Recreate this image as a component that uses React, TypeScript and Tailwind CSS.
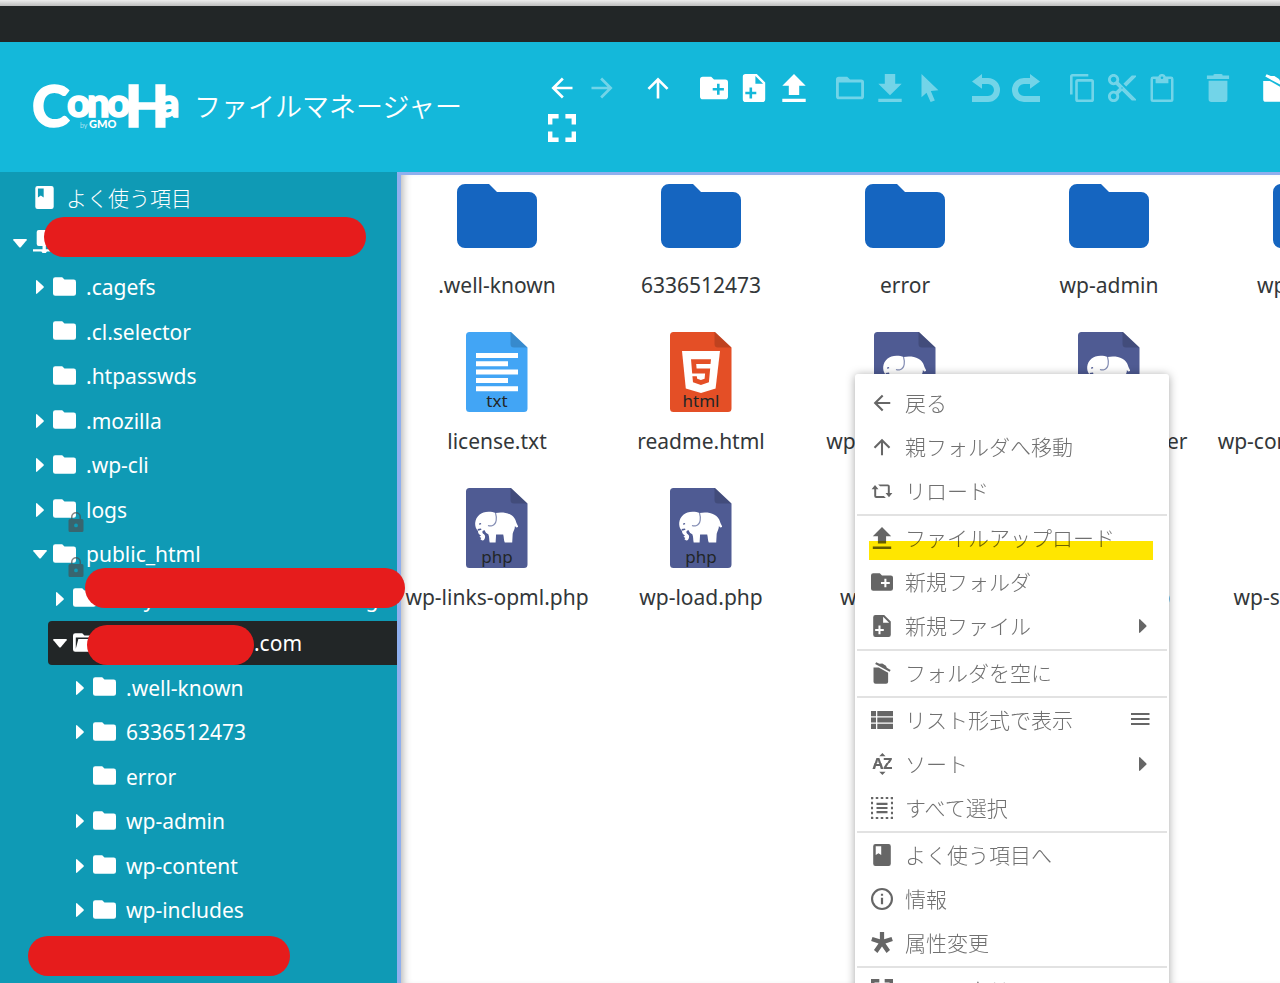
import React from 'react';

type IconProps = { className?: string };

// All glyphs share one 28 x 28 grid.
const ICONS = {
  back: 'M24.5 12.7v2.6H8.5l7.3 7.3-1.9 1.9L3.4 14 13.9 3.5l1.9 1.9-7.3 7.3z',
  forward: 'M3.5 12.7v2.6h16l-7.3 7.3 1.9 1.9L24.6 14 14.1 3.5l-1.9 1.9 7.3 7.3z',
  up: 'M12.7 24.5h2.6V8.5l7.3 7.3 1.9-1.9L14 3.4 3.5 13.9l1.9 1.9 7.3-7.3z',
  folder:
    'M2.8 2.8h8.4L14 5.6h11.2A2.8 2.8 0 0 1 28 8.4v14a2.8 2.8 0 0 1-2.8 2.8H2.8A2.8 2.8 0 0 1 0 22.4V5.6a2.8 2.8 0 0 1 2.8-2.8z',
  folderOpen:
    'M2.8 2.8h8.4L14 5.6h11.2A2.8 2.8 0 0 1 28 8.4v14a2.8 2.8 0 0 1-2.8 2.8H2.8A2.8 2.8 0 0 1 0 22.4V5.6a2.8 2.8 0 0 1 2.8-2.8zM6.5 9.8L3.4 21.5V7.8h21.8v2z',
  folderPlus:
    'M2.8 2.8h8.4L14 5.6h11.2A2.8 2.8 0 0 1 28 8.4v14a2.8 2.8 0 0 1-2.8 2.8H2.8A2.8 2.8 0 0 1 0 22.4V5.6a2.8 2.8 0 0 1 2.8-2.8zM17 9.8v4.2h-4.3v2.6H17v4.2h2.6v-4.2h4.3V14h-4.3V9.8z',
  folderOutline:
    'M2.8 2.8h8.4L14 5.6h11.2A2.8 2.8 0 0 1 28 8.4v14a2.8 2.8 0 0 1-2.8 2.8H2.8A2.8 2.8 0 0 1 0 22.4V5.6a2.8 2.8 0 0 1 2.8-2.8zM2.8 8.4v14h22.4v-14z',
  filePlus:
    'M5.6 0h11.2l8.4 8.4v16.8a2.8 2.8 0 0 1-2.8 2.8H5.6a2.8 2.8 0 0 1-2.8-2.8V2.8A2.8 2.8 0 0 1 5.6 0zM15.4 2.1v7.7h7.7zM9.5 13.5v4.2H5.3v2.6h4.2v4.2h2.6v-4.2h4.2v-2.6h-4.2v-4.2z',
  upload: 'M14 0l11.7 11.7h-6.5V21H8.8v-9.3H2.3zM2.3 24.7h23.4V28H2.3z',
  download: 'M8.8 0h10.4v9.8h6.5L14 21.3 2.3 9.8h6.5zM2.3 24.7h23.4V28H2.3z',
  cursor: 'M5.5 0v23.2l5-4.4L14.6 28l4.2-1.6-4-9.4 7.6-.7z',
  undo: 'M0 7.4L10 0v4h6a12 12 0 0 1 0 24H0v-6h16a6 6 0 0 0 0-12h-6v4.8z',
  redo: 'M28 7.4L18 0v4h-6a12 12 0 0 0 0 24h16v-6H12a6 6 0 0 1 0-12h6v4.8z',
  copy: 'M20.3 0H4.6A2.6 2.6 0 0 0 2 2.6v17.8h2.6V2.6h15.7zM23.4 5.1H9.8a2.6 2.6 0 0 0-2.6 2.6v17.7A2.6 2.6 0 0 0 9.8 28h13.6a2.6 2.6 0 0 0 2.6-2.6V7.7a2.6 2.6 0 0 0-2.6-2.6zM9.8 7.7h13.6v17.7H9.8z',
  paste:
    'M23 2.6h-5.3a3.9 3.9 0 0 0-7.4 0H5A2.5 2.5 0 0 0 2.5 5v20.5A2.5 2.5 0 0 0 5 28h18a2.5 2.5 0 0 0 2.5-2.5V5A2.5 2.5 0 0 0 23 2.6zM14 2.4a1.3 1.3 0 1 1 0 2.7 1.3 1.3 0 0 1 0-2.7zM5 5h2.6v4.2h12.8V5H23v20.5H5z',
  trash: 'M9.5.4L10.8 0h6.4l1.3.4v1h6.6v3.7H2.9V1.4h6.6zM4.6 6.7h18.8v18.5a2.8 2.8 0 0 1-2.8 2.8H7.4a2.8 2.8 0 0 1-2.8-2.8z',
  empty:
    'M3.2 7h6.6l12 6.8v11.4a2.6 2.6 0 0 1-2.6 2.6H5.8a2.6 2.6 0 0 1-2.6-2.6zM6.6.2l4.2 1.9 3.6-.1 4.6 2.9 1.2 2.5 4.8 2.9-1.3 2.2L5.3 2.6z',
  fullscreen:
    'M0 0h10.6v4.4H4.4v6.2H0zM17.4 0H28v10.6h-4.4V4.4h-6.2zM0 17.4h4.4v6.2h6.2V28H0zM23.6 17.4H28V28H17.4v-4.4h6.2z',
  reload:
    'M5.1 6.5L9.5 11.8H6.6v8.6h9.8l2.5 2.5H6.6a2.5 2.5 0 0 1-2.5-2.5v-8.6H.8zM22.9 22L18.500 16.700h2.900V8.100h-9.800L9.100 5.600h12.300a2.500 2.500 0 0 1 2.500 2.500v8.600h3.300z',
  list: 'M0 2.5h6.4v6.6H0zM8 2.5h20v6.6H8zM0 10.7h6.4v6.6H0zM8 10.7h20v6.6H8zM0 18.9h6.4v6.6H0zM8 18.9h20v6.6H8z',
  book: 'M5.6 0h16.8a2.8 2.8 0 0 1 2.8 2.8v22.4a2.8 2.8 0 0 1-2.8 2.8H5.6a2.8 2.8 0 0 1-2.8-2.8V2.8A2.8 2.8 0 0 1 5.6 0zM6 2.9v11l3.5-2.2 3.5 2.2v-11z',
  info: 'M14 0a14 14 0 1 1 0 28 14 14 0 0 1 0-28zM14 2.7a11.3 11.3 0 1 0 0 22.6 11.3 11.3 0 0 0 0-22.6zM12.6 7.2h2.8V10h-2.8zM12.6 12.4h2.8v8.4h-2.8z',
  asterisk:
    'M11.3 0h5.4v9.3l9.4-3 1.7 5.1-9.4 3.1 5.8 8.5-4.4 3.6L14 18.4l-5.8 8.2-4.4-3.6 5.8-8.5-9.4-3.1 1.7-5.1 9.4 3z',
  computer:
    'M7 0h14a2.5 2.5 0 0 1 2.5 2.5V17a2.5 2.5 0 0 1-2.5 2.5h-5.4v3.9H28v2.8H17L15.6 28h-4l-1.4-1.8H0v-2.8h11.6v-3.9H7A2.5 2.5 0 0 1 4.500 17V2.500A2.500 2.500 0 0 1 7 0z',
} as const;

type IconName = keyof typeof ICONS | 'cut' | 'sort' | 'selectAll';

const Icon = ({ name, className }: { name: IconName } & IconProps) => {
  if (name === 'cut') {
    return (
      <svg viewBox="2 2 20 20" fill="currentColor" className={className} aria-hidden="true">
        <path d="M9.64 7.64c.23-.5.36-1.05.36-1.64 0-2.21-1.79-4-4-4S2 3.79 2 6s1.79 4 4 4c.59 0 1.14-.13 1.64-.36L10 12l-2.36 2.36C7.14 14.13 6.59 14 6 14c-2.21 0-4 1.79-4 4s1.79 4 4 4 4-1.79 4-4c0-.59-.13-1.14-.36-1.64L12 14l7 7h3v-1L9.64 7.64zM6 8c-1.1 0-2-.89-2-2s.9-2 2-2 2 .89 2 2-.9 2-2 2zm0 12c-1.1 0-2-.89-2-2s.9-2 2-2 2 .89 2 2-.9 2-2 2zm6-7.5c-.28 0-.5-.22-.5-.5s.22-.5.5-.5.5.22.5.5-.22.5-.5.5zM19 3l-6 6 2 2 7-7V3z" />
      </svg>
    );
  }
  if (name === 'sort') {
    return (
      <svg viewBox="0 0 28 28" fill="currentColor" className={`overflow-visible ${className}`} aria-hidden="true">
        <path d="M14.5 0l4 4h-8zM14.5 28l4-4h-8z" />
        <text x="14.5" y="21" textAnchor="middle" fontSize="20" fontWeight="700" fontFamily="Noto Sans, sans-serif">
          AZ
        </text>
      </svg>
    );
  }
  if (name === 'selectAll') {
    return (
      <svg viewBox="0 0 28 28" fill="none" stroke="currentColor" className={className} aria-hidden="true">
        <rect x="1.3" y="1.3" width="25.4" height="25.4" strokeWidth="2.6" strokeDasharray="3.2 3.15" strokeDashoffset="1.6" />
        <path d="M7 8.7h14M7 14h14M7 19.3h14" strokeWidth="2.8" />
      </svg>
    );
  }
  return (
    <svg viewBox="0 0 28 28" fill="currentColor" fillRule="evenodd" className={className} aria-hidden="true">
      <path d={ICONS[name]} />
    </svg>
  );
};

// ── TOOLBAR ──
type Tool = { icon: IconName; label: string; disabled?: boolean };

const TOOL_GROUPS: Tool[][] = [
  [{ icon: 'back', label: '戻る' }, { icon: 'forward', label: '進む', disabled: true }],
  [{ icon: 'up', label: '親フォルダへ移動' }],
  [
    { icon: 'folderPlus', label: '新規フォルダ' },
    { icon: 'filePlus', label: '新規ファイル' },
    { icon: 'upload', label: 'ファイルアップロード' },
  ],
  [
    { icon: 'folderOutline', label: '開く', disabled: true },
    { icon: 'download', label: 'ダウンロード', disabled: true },
    { icon: 'cursor', label: '選択', disabled: true },
  ],
  [{ icon: 'undo', label: '元に戻す', disabled: true }, { icon: 'redo', label: 'やり直し', disabled: true }],
  [
    { icon: 'copy', label: 'コピー', disabled: true },
    { icon: 'cut', label: '切り取り', disabled: true },
    { icon: 'paste', label: '貼り付け', disabled: true },
  ],
  [{ icon: 'trash', label: '削除', disabled: true }],
  [{ icon: 'empty', label: 'フォルダを空に' }],
];

const ToolButton = ({ tool }: { tool: Tool }) => (
  <button
    type="button"
    aria-label={tool.label}
    disabled={tool.disabled}
    className="flex size-10 shrink-0 items-center justify-center text-white disabled:opacity-40"
  >
    <Icon name={tool.icon} className="size-7" />
  </button>
);

const Logo = () => (
  <svg viewBox="0 0 148 46" className="h-[46px] w-[148px] shrink-0 overflow-visible" fill="#fff" role="img" aria-label="ConoHa by GMO">
    <text fontFamily="Lato, sans-serif" fontWeight="900" stroke="#fff" strokeWidth="1.5">
      <tspan x="-1" y="43" fontSize="57">C</tspan>
      <tspan x="34 54 74" y="33" fontSize="40">ono</tspan>
      <tspan x="92" y="43" fontSize="57">H</tspan>
      <tspan x="126" y="33" fontSize="40">a</tspan>
    </text>
    <text y="44" fontFamily="Lato, sans-serif">
      <tspan x="47" fontSize="7">by</tspan>
      <tspan x="56" fontSize="11" fontWeight="900">GMO</tspan>
    </text>
  </svg>
);

const Header = () => (
  <header className="flex h-[130px] shrink-0 items-start overflow-hidden bg-[#14b8da]">
    <h1 className="flex w-[542px] shrink-0 items-center gap-[13px] pt-[42px] pl-[33px] text-[27px] leading-[46px] font-[350] text-white">
      <Logo />
      ファイルマネージャー
    </h1>
    <div role="toolbar" aria-label="ツールバー" className="min-w-0 flex-1 pt-[26px]">
      <div className="flex gap-4">
        {TOOL_GROUPS.map((group, i) => (
          <div key={i} className="flex shrink-0">
            {group.map((tool) => <ToolButton key={tool.label} tool={tool} />)}
          </div>
        ))}
      </div>
      <ToolButton tool={{ icon: 'fullscreen', label: 'フルスクリーン' }} />
    </div>
  </header>
);

// ── FOLDER TREE ──
type TreeItem = {
  name: string;
  level: 0 | 1 | 2 | 3;
  icon?: IconName;
  state?: 'open' | 'closed';
  locked?: boolean;
  selected?: boolean;
  mask?: string;
};

const TREE: TreeItem[] = [
  { name: 'よく使う項目', level: 0, icon: 'book' },
  { name: '', level: 0, icon: 'computer', state: 'open', mask: 'left-9 -top-[3px] w-[322px]' },
  { name: '.cagefs', level: 1, state: 'closed' },
  { name: '.cl.selector', level: 1 },
  { name: '.htpasswds', level: 1 },
  { name: '.mozilla', level: 1, state: 'closed' },
  { name: '.wp-cli', level: 1, state: 'closed' },
  { name: 'logs', level: 1, state: 'closed', locked: true },
  { name: 'public_html', level: 1, state: 'open', locked: true },
  { name: 'nanyxxxxxxxxxxxxxxxxxxxg.', level: 2, state: 'closed', mask: 'left-[37px] -top-2 w-80' },
  { name: 'example-demo.com', level: 2, icon: 'folderOpen', state: 'open', selected: true, mask: 'left-[39px] top-1 w-[167px]' },
  { name: '.well-known', level: 3, state: 'closed' },
  { name: '6336512473', level: 3, state: 'closed' },
  { name: 'error', level: 3 },
  { name: 'wp-admin', level: 3, state: 'closed' },
  { name: 'wp-content', level: 3, state: 'closed' },
  { name: 'wp-includes', level: 3, state: 'closed' },
];

const INDENT = { 0: 'ml-2', 1: 'ml-7', 2: 'ml-12', 3: 'ml-[68px]' };

const Caret = ({ state }: { state?: 'open' | 'closed' }) => (
  <svg viewBox="0 0 20 20" className="size-5 shrink-0" fill="currentColor" aria-hidden="true">
    {state === 'open' && <path d="M4 6h12q1.5 0 .6 1.2L11 14q-1 1-2 0L3.4 7.2Q2.5 6 4 6z" />}
    {state === 'closed' && <path d="M6 4q0-1.5 1.2-.6l6.3 5.8q.8.8 0 1.6l-6.3 5.8Q6 17.5 6 16z" />}
  </svg>
);

const Lock = () => (
  <svg viewBox="0 0 16 20" className="absolute top-[15px] left-[15px] h-5 w-4" fill="#4a5052" opacity="0.7" aria-hidden="true">
    <path
      fillRule="evenodd"
      d="M3 7V5a5 5 0 0 1 10 0v2h1a1.5 1.5 0 0 1 1.5 1.5v10A1.5 1.5 0 0 1 14 20H2a1.5 1.5 0 0 1-1.5-1.5v-10A1.5 1.5 0 0 1 2 7zM4.5 7h7V5a3.5 3.5 0 0 0-7 0zM8 11.5a1.9 1.9 0 1 0 0 3.8 1.9 1.9 0 0 0 0-3.8z"
    />
  </svg>
);

const Mask = ({ className }: IconProps) => (
  <span className={`absolute z-10 h-10 rounded-full bg-[#e61c1c] ${className}`} />
);

const TreeRow = ({ item }: { item: TreeItem }) => (
  <li className="h-11 even:h-[45px]">
    <a
      href="#"
      className={`relative flex h-full items-center rounded-l-sm pl-0.5 whitespace-nowrap text-white ${INDENT[item.level]} ${
        item.selected ? 'bg-[#222627]' : ''
      }`}
    >
      <Caret state={item.state} />
      <span className="relative mr-2.5 mb-0.5 ml-[3px] shrink-0">
        <Icon name={item.icon ?? 'folder'} className="size-[23px]" />
        {item.locked && <Lock />}
      </span>
      <span className={item.level === 0 ? 'mt-0.5 font-light' : 'mt-0.5'}>{item.name}</span>
      {item.mask && <Mask className={item.mask} />}
    </a>
  </li>
);

const Sidebar = () => (
  <nav aria-label="フォルダ" className="relative z-10 w-[397px] shrink-0 bg-[#0f9ab5] pt-1">
    <ul>
      {TREE.map((item, i) => <TreeRow key={i} item={item} />)}
      <li className="relative h-11">
        <Mask className="top-1 left-7 w-[262px]" />
      </li>
    </ul>
  </nav>
);

// ── FILE GRID ──
type FileKind = 'folder' | 'txt' | 'html' | 'php';

const FILES: { name: string; kind: FileKind }[] = [
  { name: '.well-known', kind: 'folder' },
  { name: '6336512473', kind: 'folder' },
  { name: 'error', kind: 'folder' },
  { name: 'wp-admin', kind: 'folder' },
  { name: 'wp-content', kind: 'folder' },
  { name: 'license.txt', kind: 'txt' },
  { name: 'readme.html', kind: 'html' },
  { name: 'wp-activate.php', kind: 'php' },
  { name: 'wp-blog-header.php', kind: 'php' },
  { name: 'wp-comments-post.php', kind: 'php' },
  { name: 'wp-links-opml.php', kind: 'php' },
  { name: 'wp-load.php', kind: 'php' },
  { name: 'wp-login.php', kind: 'php' },
  { name: 'wp-mail.php', kind: 'php' },
  { name: 'wp-settings.php', kind: 'php' },
];

const PAGE_FILL = { txt: '#42a5f5', html: '#e44f26', php: '#4f5b93' };

const FileIcon = ({ kind }: { kind: FileKind }) => {
  if (kind === 'folder') {
    return (
      <svg viewBox="0 0 80 80" className="size-20" fill="#1565c0" aria-hidden="true">
        <path d="M8 8h24l8 8h32a8 8 0 0 1 8 8v40a8 8 0 0 1-8 8H8a8 8 0 0 1-8-8V16a8 8 0 0 1 8-8z" />
      </svg>
    );
  }
  return (
    <span className="relative">
      <svg viewBox="0 0 62 80" className="h-20 w-[62px]" fill="#fff" aria-hidden="true">
        <path fill={PAGE_FILL[kind]} d="M3.5 0H45l16.5 15.5v61A3.5 3.5 0 0 1 58 80H3.5A3.5 3.5 0 0 1 0 76.5v-73A3.5 3.5 0 0 1 3.5 0z" />
        <path fill="#000" opacity="0.16" d="M45 0l16.5 15.5H48a3.5 3.5 0 0 1-3.5-3.5V0z" />
        {kind === 'txt' && <path d="M10 21h42v5H10zM10 29.3h32v5H10zM10 37.6h42v5H10zM10 46h32v5H10zM10 54.3h42v5H10z" />}
        {kind === 'html' && (
          <>
            <path d="M12 19h38l-4.4 37.5L31 61l-15.2-4.5z" />
            <path
              fill={PAGE_FILL.html}
              d="M21 27.3h20l-.5 4.8H26.2l.4 4.5h13.6l-1.3 13.6-8 2.8-7.9-2.8-.6-6h4.4l.4 2.6 3.7 1.3 3.7-1.3.5-5.2H22.2z"
            />
          </>
        )}
        {kind === 'php' && (
          <>
            <path d="M29.500 25c8-1.500 18.500 0 20.700 9.300.5 1.800 1.900 3 1.900 4.800l-1.900.4-1.300-1.500c.2 2.800-1.700 5.300-2.200 7.800l-.5 8.600h-7.400c-1.200-2-.7-5.200-1.600-8l-7.100.2-.5 7.800h-5.900c-.7-2.500-.2-5.500-1.400-8.100-1.900-.8-3.100-2.100-3.600-4-1.600-.2-2.800 1.100-2.100 2.700.5 1.200 2.600 1.400 2.500 3.400 0 2-.8 4.100-2.900 4.100l-1.800-1.300.9-1.200-1.800-1.300 1.500-1.200c-1.700-.7-3.100-2.400-3-4.500-2.500-2.200-3-5.600-2.800-8.200.7-6.600 6-10.900 13.300-11 3 0 5.300.3 7 1.200z" />
            <path fill="none" stroke={PAGE_FILL.php} strokeWidth="1.200" d="M29.500 25c1.400 4.500 1.600 11-3.500 12.700-1.500.5-2.700.3-4-.2" opacity="0.700" />
            <path fill={PAGE_FILL.php} d="M13 35.500l2-.5.2 1.200-2 .5zM11.500 41l3.500-.6.5 1.400-3.200 1z" />
          </>
        )}
      </svg>
      <span className="absolute inset-x-0 bottom-0 text-center text-[17px] leading-[23px] text-[#222627]">{kind}</span>
    </span>
  );
};

const FileGrid = () => (
  <main className="min-w-0 flex-1 overflow-hidden border-t-3 border-l-4 border-[#8fafee] bg-white shadow-[inset_8px_0_8px_-6px_rgba(0,0,0,0.3)]">
    <ul className="grid auto-rows-[156px] grid-cols-[repeat(5,192px)] gap-x-3 pt-px text-[#333739]">
      {FILES.map((file) => {
        const [base, ext] = file.name.split('.php');
        return (
          <li key={file.name} className="flex flex-col items-center gap-[15px] text-center leading-7">
            <FileIcon kind={file.kind} />
            <span className="w-full">
              {base}
              {ext !== undefined && <><wbr />.php</>}
            </span>
          </li>
        );
      })}
    </ul>
  </main>
);

// ── CONTEXT MENU ──
type MenuItem = { icon: IconName; label: string; extra?: 'submenu' | 'settings'; marked?: boolean };

const MENU: MenuItem[][] = [
  [{ icon: 'back', label: '戻る' }, { icon: 'up', label: '親フォルダへ移動' }, { icon: 'reload', label: 'リロード' }],
  [
    { icon: 'upload', label: 'ファイルアップロード', marked: true },
    { icon: 'folderPlus', label: '新規フォルダ' },
    { icon: 'filePlus', label: '新規ファイル', extra: 'submenu' },
  ],
  [{ icon: 'empty', label: 'フォルダを空に' }],
  [
    { icon: 'list', label: 'リスト形式で表示', extra: 'settings' },
    { icon: 'sort', label: 'ソート', extra: 'submenu' },
    { icon: 'selectAll', label: 'すべて選択' },
  ],
  [{ icon: 'book', label: 'よく使う項目へ' }, { icon: 'info', label: '情報' }, { icon: 'asterisk', label: '属性変更' }],
  [{ icon: 'fullscreen', label: 'フルスクリーン' }],
];

const ContextMenu = () => (
  <div
    role="menu"
    className="absolute top-[374px] left-[855px] z-20 w-[314px] rounded-[3px] bg-white py-[7px] text-[#666] shadow-[0_1px_10px_rgba(0,0,0,0.35)]"
  >
    {MENU.map((group, i) => (
      <div key={i} role="group" className={i > 0 ? 'mx-0.5 mt-px border-t-2 border-[#e2e2e2]' : 'mx-0.5'}>
        {group.map((item) => (
          <button
            key={item.label}
            type="button"
            role="menuitem"
            className="relative flex h-11 w-full items-center gap-3 pr-4 pl-3.5 text-left"
          >
            <Icon name={item.icon} className="size-[22px] shrink-0" />
            <span className="mt-0.5 flex-1 font-light text-[#707070]">{item.label}</span>
            {item.extra && (
              <svg viewBox="0 0 22 22" className="size-[22px]" fill="currentColor" aria-hidden="true">
                {item.extra === 'submenu' ? (
                  <path d="M10 5q0-1.5 1.2-.6l6 5.8q.8.8 0 1.6l-6 5.8Q10 18.5 10 17z" />
                ) : (
                  <path d="M2 4h18.5v2H2zM2 9h18.5v2H2zM2 14h18.5v2H2z" />
                )}
              </svg>
            )}
            {item.marked && <span className="absolute top-[25px] right-3.5 left-3 h-[19px] bg-[#ffe600] mix-blend-multiply" />}
          </button>
        ))}
      </div>
    ))}
  </div>
);

export default function App() {
  return (
    <div className="relative flex h-screen flex-col overflow-hidden bg-white font-['Noto_Sans','Noto_Sans_CJK_JP',sans-serif] text-[21px]">
      <div className="h-1.5 shrink-0 bg-linear-to-b from-[#ececec] to-[#bdbdbd]" />
      <div className="h-9 shrink-0 bg-[#222627]" />
      <Header />
      <div className="flex min-h-0 flex-1">
        <Sidebar />
        <FileGrid />
      </div>
      <ContextMenu />
    </div>
  );
}
